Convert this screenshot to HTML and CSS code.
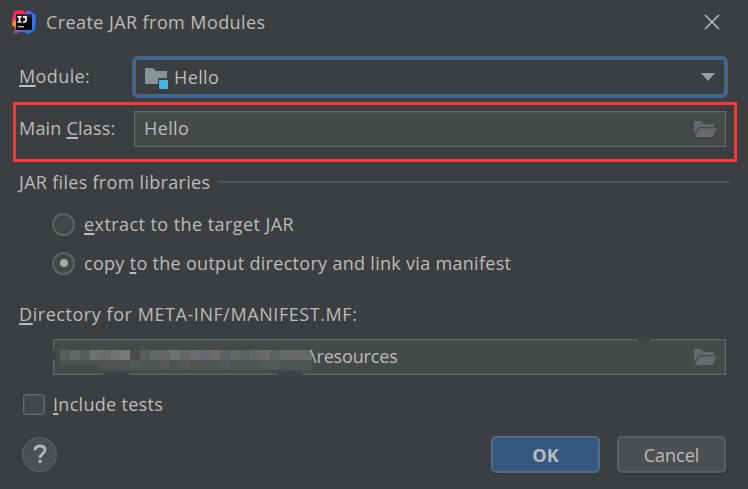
FILE: index.html
```
<!DOCTYPE html>
<html lang="en">
<head>
<meta charset="utf-8">
<title>Create JAR from Modules</title>
<link rel="stylesheet" href="styles.css">
</head>
<body>
<svg class="defs" width="0" height="0">
  <symbol id="folder-open" viewBox="0 0 24 18">
    <path d="M1 1h7l3 3h10v3H6L1 14z"/>
    <path d="M6.5 8.3H24L19.5 17H1.7z"/>
  </symbol>
</svg>
<main class="dialog">
  <header class="titlebar">
    <svg class="logo" viewBox="0 0 24 24">
      <defs>
        <linearGradient id="cube" x1="0" y1="0" x2="0" y2="1"><stop offset="0" stop-color="#333"/><stop offset=".5" stop-color="#000"/></linearGradient>
        <linearGradient id="blue" x1="0" y1="0" x2="1" y2="1"><stop offset="0" stop-color="#6b57ff"/><stop offset=".5" stop-color="#3f6ee8"/><stop offset="1" stop-color="#1d79f2"/></linearGradient>
        <linearGradient id="pink" x1="0" y1="0" x2="0" y2="1"><stop offset="0" stop-color="#ff2857"/><stop offset=".6" stop-color="#f5326f"/><stop offset="1" stop-color="#8c45d8"/></linearGradient>
      </defs>
      <path fill="url(#blue)" d="M11 4l6-4 7 5-1 15-6 4-9-3z"/>
      <path fill="url(#pink)" d="M2 1l8-1 4 4-8 13 5 4-9 3 1-6-3-7z"/>
      <path fill="#f98b1c" d="M0 13l3-3 2 3-1 5-4-3z"/>
      <path fill="url(#cube)" d="M4 4h16v16H4z"/>
      <path fill="none" stroke="#fff" stroke-width="1.7" d="M5.5 6.8h4M7.5 6.5v5.5M5.5 12h4M11 6.8h3v3.7q0 1.5-3 1.5"/>
      <path fill="#bbb" d="M6 16h6v1.4H6z"/>
    </svg>
    <h1 class="title">Create JAR from Modules</h1>
    <svg class="close" viewBox="0 0 16 16"><path d="M1 1l14 14M15 1L1 15"/></svg>
  </header>

  <div class="row module-row">
    <label class="label module-label"><u>M</u>odule:</label>
    <div class="combo">
      <svg class="module-icon" viewBox="0 0 24 22">
        <path fill="#87939a" d="M1 1h8l3 3h11v7h-9v6H1z"/>
        <path fill="#40b6e0" d="M15 13h9v9h-9z"/>
      </svg>
      <span class="combo-text">Hello</span>
      <svg class="arrow" viewBox="0 0 14 8"><path d="M0 0h14L7 8z"/></svg>
    </div>
  </div>

  <div class="row highlight">
    <label class="label class-label">Main <u>C</u>lass:</label>
    <div class="field">
      <span class="field-text">Hello</span>
      <svg class="browse"><use href="#folder-open"/></svg>
    </div>
  </div>

  <div class="section"><span class="section-text">JAR files from libraries</span><i class="rule"></i></div>

  <div class="option"><i class="radio"></i><span class="extract"><u>e</u>xtract to the target JAR</span></div>
  <div class="option"><i class="radio selected"></i><span class="copy">copy <u>t</u>o the output directory and link via manifest</span></div>

  <div class="directory-label"><span class="directory-text"><u>D</u>irectory for META-INF/MANIFEST.MF:</span></div>
  <div class="field directory">
    <svg class="mosaic" viewBox="0 0 258 28">
      <g fill="#404345">
        <ellipse cx="62" cy="32" rx="13" ry="2.5"/>
        <ellipse cx="235" cy="32" rx="13" ry="3"/>
        <ellipse cx="-1.5" cy="13" rx="2.5" ry="6"/>
        <ellipse cx="589" cy="-3" rx="7" ry="3"/>
      </g>
      <g shape-rendering="crispEdges">
        <path fill="#4a4d4e" d="M5 3h10v5H5zM85 3h10v5H85z"/>
        <path fill="#505455" d="M5 18h252v10H45v-5H5z"/>
        <path fill="#545858" d="M75 18h10v10H75zM105 18h10v10h-10zM125 18h10v10h-10zM165 18h10v10h-10zM205 18h20v10h-20z"/>
        <path fill="#5a5d5e" d="M5 8h10v10H5zM25 8h10v10H25zM85 8h10v10H85z"/>
        <path fill="#646667" d="M15 8h10v10H15zM95 8h20v10H95zM125 8h10v10h-10zM175 8h10v10h-10zM195 8h10v10h-10z"/>
        <path fill="#6d7179" d="M35 8h10v10H35zM115 8h10v10h-10z"/>
        <path fill="#6c6c69" d="M45 8h10v10H45zM135 8h10v10h-10zM205 8h10v10h-10z"/>
        <path fill="#747070" d="M55 8h10v10H55z"/>
        <path fill="#75797c" d="M65 8h10v10H65z"/>
        <path fill="#4c4c4a" d="M75 8h10v10H75z"/>
        <path fill="#656973" d="M145 8h10v10h-10z"/>
        <path fill="#706b66" d="M155 8h10v10h-10z"/>
        <path fill="#5e6266" d="M165 8h10v10h-10zM185 8h10v10h-10zM215 8h10v10h-10z"/>
        <path fill="#686969" d="M225 8h32v10h-32z"/>
      </g>
    </svg>
    <span class="path">\resources</span>
    <svg class="browse"><use href="#folder-open"/></svg>
  </div>

  <div class="check-row"><i class="checkbox"></i><span class="include"><u>I</u>nclude tests</span></div>

  <footer class="footer">
    <button class="help"><svg viewBox="0 0 14 20"><path d="M2 6.2Q2.2 2 7 2t5 4c0 3.6-5 3.7-5 8"/><path d="M7 16v3"/></svg></button>
    <button class="button ok">OK</button>
    <button class="button cancel">Cancel</button>
  </footer>
</main>
</body>
</html>
```
FILE: styles.css
```
* { box-sizing: border-box; }
body {
  margin: 0;
  background: #3c3f41;
  color: #bbb;
  font: 18px/24px "Open Sans", "Noto Sans", sans-serif;
  letter-spacing: .3px;
}
.defs { display: block; }
svg { flex: none; }
u {
  text-decoration: underline 2px;
  text-underline-offset: 2px;
  text-decoration-skip-ink: none;
}
.dialog {
  width: 748px;
  height: 489px;
  display: flex;
  flex-direction: column;
  overflow: hidden;
}
.titlebar {
  height: 43px;
  padding: 0 28px 0 12px;
  display: flex;
  align-items: center;
}
.logo { width: 24px; height: 24px; }
.title { margin: 0 auto 0 10px; font-size: 18px; font-weight: 400; letter-spacing: .42px; }
.close { width: 16px; height: 16px; fill: none; stroke: #bbb; stroke-width: 1.5; }
.row { display: flex; align-items: center; }
.label { flex: none; padding-bottom: 2px; }
.module-row { height: 42px; margin: 13px 20px 0 19px; }
.module-label { width: 113px; letter-spacing: .4px; }
.combo {
  flex: 1;
  height: 42px;
  display: flex;
  align-items: center;
  padding: 0 9px 0 8px;
  border: 4px solid #41678d;
  border-radius: 6px;
}
.module-icon { width: 24px; height: 22px; margin-top: 1px; }
.combo-text { margin: 0 auto 0 6px; letter-spacing: .4px; }
.arrow { width: 14px; height: 8px; fill: #9b9fa1; }
.highlight {
  height: 60px;
  margin: 4px 11px 0 13px;
  border: 3px solid #fc3535;
  padding: 0 8px 7px 3px;
}
.class-label { width: 115px; letter-spacing: .2px; }
.field {
  height: 36px;
  flex: 1;
  display: flex;
  align-items: center;
  padding: 0 8px 0 9px;
  border: 1px solid #646667;
  box-shadow: inset 0 0 0 1px #505354;
  background: #45494a;
}
.field-text { margin-right: auto; padding-bottom: 2px; letter-spacing: .4px; }
.browse { width: 24px; height: 18px; fill: #646b6e; }
.section { height: 24px; margin: 8px 18px 0 19px; display: flex; align-items: center; }
.section-text { width: 199px; white-space: nowrap; }
.rule { flex: 1; height: 2px; background: #515354; }
.option { height: 24px; margin: 18px 0 0 52px; display: flex; align-items: center; white-space: nowrap; }
.option + .option { margin-top: 15px; }
.extract { letter-spacing: .43px; }
.radio {
  width: 23px;
  height: 23px;
  margin-right: 9px;
  border: 2px solid #606364;
  border-radius: 50%;
  background: #434748;
  display: grid;
  place-items: center;
}
.selected::before { content: ""; width: 8px; height: 8px; border-radius: 50%; background: #a9a9a9; }
.directory-label { height: 24px; margin: 27px 0 0 19px; letter-spacing: .56px; }
.directory { flex: none; margin: 13px 22px 0 53px; padding-left: 1px; }
.mosaic { width: 258px; height: 28px; margin-top: -2px; overflow: visible; }
.path { margin: 0 auto 0 -3px; padding-bottom: 2px; letter-spacing: -.15px; }
.check-row { height: 24px; margin: 17px 0 0 23px; display: flex; align-items: center; }
.checkbox {
  width: 22px;
  height: 21px;
  margin-right: 8px;
  border: 1px solid #6b6b6b;
  border-radius: 3px;
  box-shadow: inset 0 0 0 1px #535657;
  background: #43474a;
}
.footer { height: 38px; margin: 19px 22px 0 22px; display: flex; align-items: center; }
.help {
  width: 35px;
  height: 35px;
  padding: 0;
  margin-right: auto;
  border: 1px solid #646667;
  border-radius: 50%;
  background: #4c5052;
  display: grid;
  place-items: center;
}
.help svg { width: 14px; height: 20px; fill: none; stroke: #b3b5b6; stroke-width: 3; }
.button {
  width: 109px;
  height: 37px;
  padding: 1px 0 0;
  border: 2px solid #5e6060;
  border-radius: 5px;
  background: #4c5052;
  color: #bbb;
  font: inherit;
  letter-spacing: 0;
  box-shadow: 0 1px 1px #333638;
}
.ok { margin-right: 17px; border-color: #4c708c; background: #365880; font-weight: 700; }
```
